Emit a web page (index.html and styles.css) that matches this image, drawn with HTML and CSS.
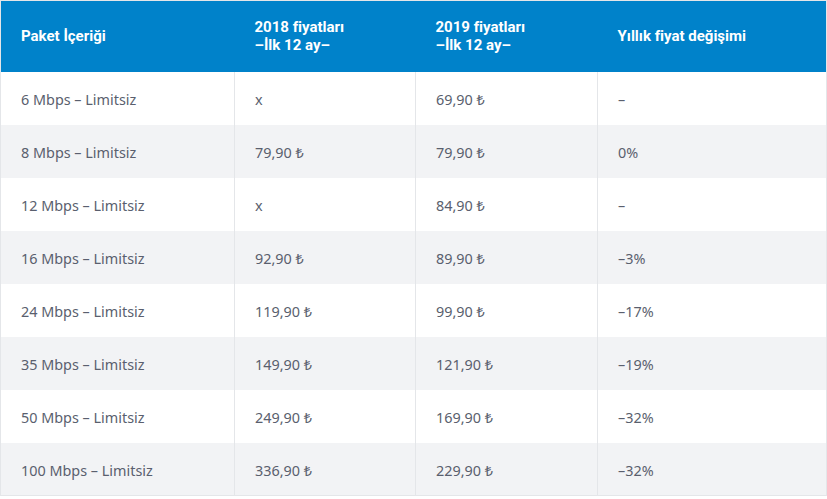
FILE: index.html
```html
<!DOCTYPE html>
<html lang="tr">
<head>
<meta charset="utf-8">
<link rel="stylesheet" href="styles.css">
</head>
<body>
<table class="price-table">
  <colgroup>
    <col class="c1"><col class="c2"><col class="c3"><col class="c4">
  </colgroup>
  <thead>
    <tr>
      <th>Paket İçeriği</th>
      <th>2018 fiyatları<br>–İlk 12 ay–</th>
      <th>2019 fiyatları<br>–İlk 12 ay–</th>
      <th>Yıllık fiyat değişimi</th>
    </tr>
  </thead>
  <tbody>
    <tr><td>6 Mbps – Limitsiz</td><td>x</td><td>69,90 ₺</td><td>–</td></tr>
    <tr><td>8 Mbps – Limitsiz</td><td>79,90 ₺</td><td>79,90 ₺</td><td>0%</td></tr>
    <tr><td>12 Mbps – Limitsiz</td><td>x</td><td>84,90 ₺</td><td>–</td></tr>
    <tr><td>16 Mbps – Limitsiz</td><td>92,90 ₺</td><td>89,90 ₺</td><td>–3%</td></tr>
    <tr><td>24 Mbps – Limitsiz</td><td>119,90 ₺</td><td>99,90 ₺</td><td>–17%</td></tr>
    <tr><td>35 Mbps – Limitsiz</td><td>149,90 ₺</td><td>121,90 ₺</td><td>–19%</td></tr>
    <tr><td>50 Mbps – Limitsiz</td><td>249,90 ₺</td><td>169,90 ₺</td><td>–32%</td></tr>
    <tr><td>100 Mbps – Limitsiz</td><td>336,90 ₺</td><td>229,90 ₺</td><td>–32%</td></tr>
  </tbody>
</table>
</body>
</html>
```
FILE: styles.css
```css
html, body {
  margin: 0;
  padding: 0;
  background: #ffffff;
}
body {
  font-family: "Noto Sans", "DejaVu Sans", sans-serif;
}
.price-table {
  border-collapse: collapse;
  width: 826px;
  border: 1px solid #e4e6e9;
  table-layout: fixed;
}
.c1 { width: 234px; }
.c2 { width: 181px; }
.c3 { width: 182px; }
.c4 { width: 229px; }
.price-table thead tr {
  background: #0082ca;
  height: 71px;
}
.price-table th {
  font-family: Roboto, "Noto Sans", sans-serif;
  color: #ffffff;
  font-size: 15px;
  font-weight: 700;
  line-height: 18px;
  text-align: left;
  padding: 0 0 0 20px;
  vertical-align: middle;
}
.price-table tbody tr {
  height: 53px;
}
.price-table tbody tr:nth-child(even) {
  background: #f2f3f5;
}
.price-table td {
  color: #5a5f6e;
  font-size: 14.4px;
  line-height: 20px;
  padding: 4px 0 0 20px;
  border-left: 1px solid #e4e6e9;
  border-right: 1px solid #e4e6e9;
  vertical-align: middle;
}
```
